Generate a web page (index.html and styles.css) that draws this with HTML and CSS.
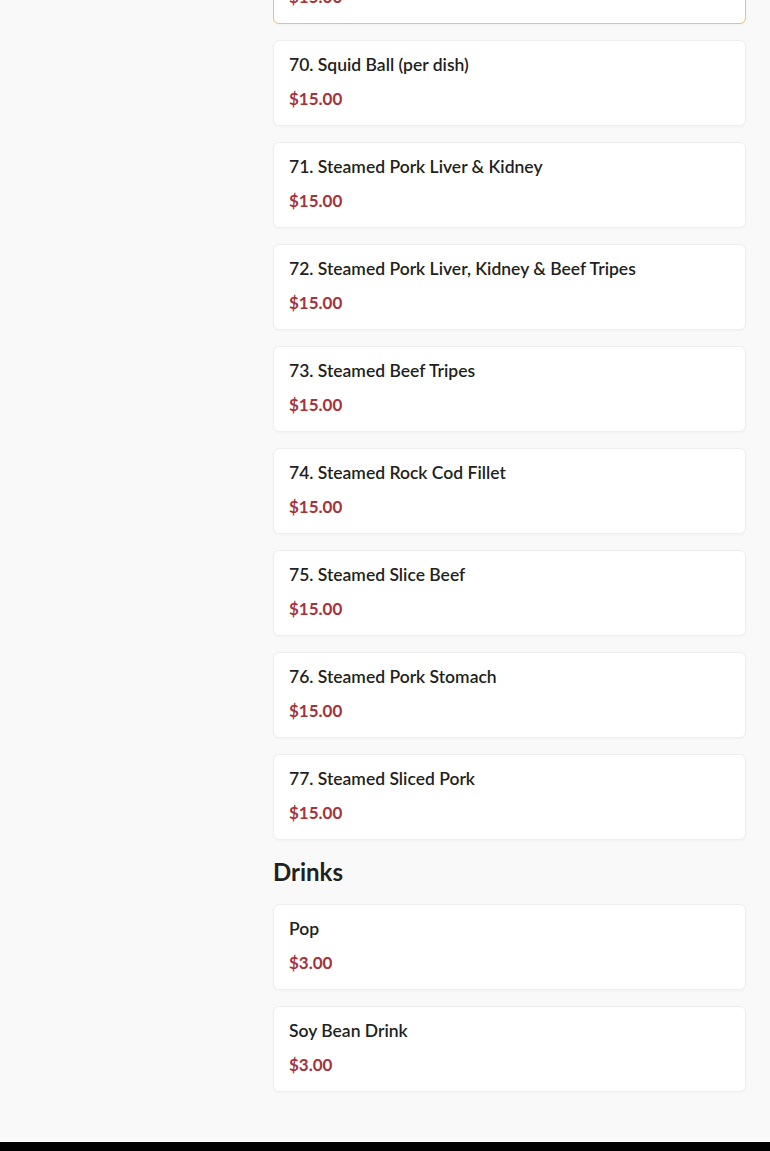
FILE: index.html
```html
<!DOCTYPE html>
<html>
<head>
<meta charset="utf-8">
<link rel="stylesheet" href="styles.css">
</head>
<body>
<div class="page">
  <aside class="side"></aside>
  <main class="menu">
    <div class="card card-active">
      <div class="title">69. Steamed Fish Ball</div>
      <div class="price">$15.00</div>
    </div>
    <div class="card"><div class="title">70. Squid Ball (per dish)</div><div class="price">$15.00</div></div>
    <div class="card"><div class="title">71. Steamed Pork Liver &amp; Kidney</div><div class="price">$15.00</div></div>
    <div class="card"><div class="title">72. Steamed Pork Liver, Kidney &amp; Beef Tripes</div><div class="price">$15.00</div></div>
    <div class="card"><div class="title">73. Steamed Beef Tripes</div><div class="price">$15.00</div></div>
    <div class="card"><div class="title">74. Steamed Rock Cod Fillet</div><div class="price">$15.00</div></div>
    <div class="card"><div class="title">75. Steamed Slice Beef</div><div class="price">$15.00</div></div>
    <div class="card"><div class="title">76. Steamed Pork Stomach</div><div class="price">$15.00</div></div>
    <div class="card"><div class="title">77. Steamed Sliced Pork</div><div class="price">$15.00</div></div>
    <h2 class="section">Drinks</h2>
    <div class="card"><div class="title">Pop</div><div class="price">$3.00</div></div>
    <div class="card"><div class="title">Soy Bean Drink</div><div class="price">$3.00</div></div>
  </main>
</div>
<footer class="footer"></footer>
</body>
</html>
```
FILE: styles.css
```css
* { box-sizing: border-box; }
html, body { margin: 0; padding: 0; }
body {
  background: #f9f9f9;
  font-family: "Lato", "Liberation Sans", sans-serif;
  color: #222;
}
.page {
  display: grid;
  grid-template-columns: 273px 1fr;
  padding-right: 24px;
  margin-top: -62px;
}
.menu {
  display: flex;
  flex-direction: column;
  gap: 16px;
  padding-bottom: 50px;
}
.card {
  height: 86px;
  background: #fff;
  border: 1px solid #eeeeee;
  border-radius: 6px;
  box-shadow: 0 1px 2px rgba(0,0,0,0.03);
  padding: 13px 15px;
  display: flex;
  flex-direction: column;
  gap: 12px;
}
.card-active { border-color: #e6c665; }
.title {
  font-size: 17.5px;
  font-weight: 600;
  line-height: 22px;
  color: #231f20;
}
.price {
  font-size: 17px;
  font-weight: 700;
  line-height: 22px;
  color: #a8323a;
}
.section {
  margin: 0;
  font-size: 24px;
  font-weight: 700;
  line-height: 32px;
  color: #231f20;
}
.footer {
  height: 200px;
  background: #000;
}
```
